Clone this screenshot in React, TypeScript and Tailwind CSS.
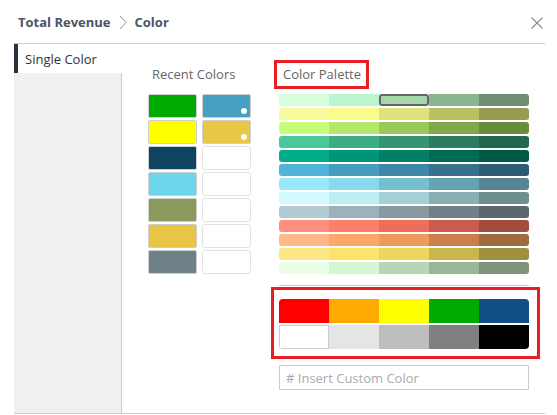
import React from "react";

const palette: string[][] = [
  ["#d6ffdb", "#bbf5cd", "#a4d8ab", "#88b693", "#6e8f73"],
  ["#f8fb9d", "#f9fc8a", "#e0e37c", "#bdbf64", "#9a9b52"],
  ["#c8fd7a", "#b2e76b", "#9ac65a", "#81a84b", "#6a8a3d"],
  ["#4cc79a", "#3eac84", "#369473", "#2c7c61", "#226650"],
  ["#00ac8a", "#00957a", "#007f65", "#006b55", "#005945"],
  ["#52b3d8", "#489dbe", "#3f87a6", "#37718e", "#2e5c74"],
  ["#9ae8fd", "#88d9ef", "#76bed1", "#65a2b3", "#568593"],
  ["#d2f9fd", "#bdeff2", "#a3cfd6", "#87b0b5", "#6e8e8f"],
  ["#b2cad3", "#9cb2ba", "#889aa1", "#727f86", "#5d686e"],
  ["#ff9080", "#ff7f69", "#ef6e5a", "#cb5c4d", "#a34c3f"],
  ["#ffb988", "#fda86a", "#ee9a5a", "#cb7f4a", "#a06a3f"],
  ["#fde685", "#fde369", "#efd55d", "#c9b74d", "#a08f40"],
  ["#eafde5", "#d5f6d2", "#b8d6b6", "#9ab698", "#7f927d"],
];

const recentLeft = ["#00aa00", "#ffff00", "#0e4461", "#6dd5ec", "#8a9a5b", "#e9c545", "#6f8087"];
const recentRight: (string | null)[] = ["#48a0c0", "#e9c645", null, null, null, null, null];

const basicTop = ["#ff0000", "#ffaa00", "#ffff00", "#00aa00", "#134f87"];
const basicBottom = ["#ffffff", "#e5e5e5", "#bebebe", "#808080", "#000000"];

const Swatch = ({ color, dot }: { color: string | null; dot?: boolean }) => {
  if (!color) {
    return <div className="h-[24px] w-[49px] rounded-[3px] border border-[#e2e2e2] bg-white" />;
  }
  return (
    <div
      className="relative h-[24px] w-[49px] rounded-[2px] border border-[#cfcfcf]"
      style={{ backgroundColor: color }}
    >
      {dot && <span className="absolute bottom-[3px] right-[3px] h-[6px] w-[6px] rounded-full bg-white" />}
    </div>
  );
};

const App = () => {
  return (
    <div className="h-[415px] w-[557px] bg-white pl-[14px] pr-[12px] font-['Open_Sans',sans-serif]">
      {/* header */}
      <div className="flex h-[44px] items-center justify-between border-b border-[#cccccc] pl-[4px] pr-[2px] pt-[2px]">
        <div className="flex items-center gap-[8px] text-[13px] font-bold text-[#4b5466]">
          <span>Total Revenue</span>
          <svg width="8" height="15" viewBox="0 0 8 15" fill="none">
            <polyline points="1,1 7,7.5 1,14" stroke="#8a8f99" strokeWidth="1" />
          </svg>
          <span>Color</span>
        </div>
        <svg width="12" height="12" viewBox="0 0 12 12" fill="none">
          <line x1="0.5" y1="0.5" x2="11.5" y2="11.5" stroke="#8a8a8a" strokeWidth="1.1" />
          <line x1="11.5" y1="0.5" x2="0.5" y2="11.5" stroke="#8a8a8a" strokeWidth="1.1" />
        </svg>
      </div>

      {/* body */}
      <div className="flex h-[370px] border-b border-[#cccccc]">
        <div className="flex w-[108px] flex-col">
          <div className="flex h-[29px] items-center border-l-4 border-[#2b3040] bg-white pl-[7px] pt-[2px] text-[13px] text-[#333]">
            Single Color
          </div>
          <div className="flex-1 border-r border-[#cccccc] bg-[#f0f0f0]" />
        </div>

        <div className="flex pl-[26px] pt-[16px]">
          {/* recent colors */}
          <div className="w-[103px]">
            <div className="flex h-[29px] items-center pl-[4px] pt-[1px] text-[13px] text-[#666]">Recent Colors</div>
            <div className="mt-[5px] flex gap-[5px]">
              <div className="flex flex-col gap-[2px]">
                {recentLeft.map((c, i) => (
                  <Swatch key={i} color={c} />
                ))}
              </div>
              <div className="flex flex-col gap-[2px]">
                {recentRight.map((c, i) => (
                  <Swatch key={i} color={c} dot={i < 2} />
                ))}
              </div>
            </div>
          </div>

          {/* palette */}
          <div className="ml-[20px] w-[269px]">
            <div className="ml-[3px] flex h-[29px] w-[95px] items-center border-[3px] border-[#e81e25] pl-[6px] pt-[1px] text-[13px] text-[#666]">
              Color Palette
            </div>
            <div className="ml-[8px] mt-[5px] flex w-[250px] flex-col gap-[2px]">
              {palette.map((row, r) => (
                <div key={r} className="flex h-[12px] overflow-hidden rounded-[3px]">
                  {row.map((c, i) =>
                    r === 0 && i === 2 ? (
                      <div
                        key={i}
                        className="h-[12px] w-[50px] rounded-[3px] border-2 border-[#666]"
                        style={{ backgroundColor: c }}
                      />
                    ) : (
                      <div key={i} className="h-[12px] w-[50px]" style={{ backgroundColor: c }} />
                    ),
                  )}
                </div>
              ))}
            </div>
            <div className="ml-[8px] mt-[11px] h-px w-[250px] bg-[#cccccc]" />
            <div className="mt-[1px] w-[269px] border-[3px] border-[#e81e25] pb-[7px] pl-[5px] pt-[9px]">
              <div className="flex h-[24px] w-[250px] overflow-hidden rounded-t-[4px]">
                {basicTop.map((c, i) => (
                  <div key={i} className="h-full w-[50px]" style={{ backgroundColor: c }} />
                ))}
              </div>
              <div className="mt-[2px] flex h-[24px] w-[250px] overflow-hidden rounded-b-[4px]">
                {basicBottom.map((c, i) => (
                  <div
                    key={i}
                    className={i === 0 ? "h-full w-[50px] border border-[#cccccc]" : "h-full w-[50px]"}
                    style={{ backgroundColor: c }}
                  />
                ))}
              </div>
            </div>
            <input
              placeholder="# Insert Custom Color"
              className="ml-[8px] mt-[6px] h-[25px] w-[250px] border border-[#cccccc] px-[6px] text-[13px] text-[#333] outline-none placeholder:text-[#aaa]"
            />
          </div>
        </div>
      </div>
    </div>
  );
};

export default App;
